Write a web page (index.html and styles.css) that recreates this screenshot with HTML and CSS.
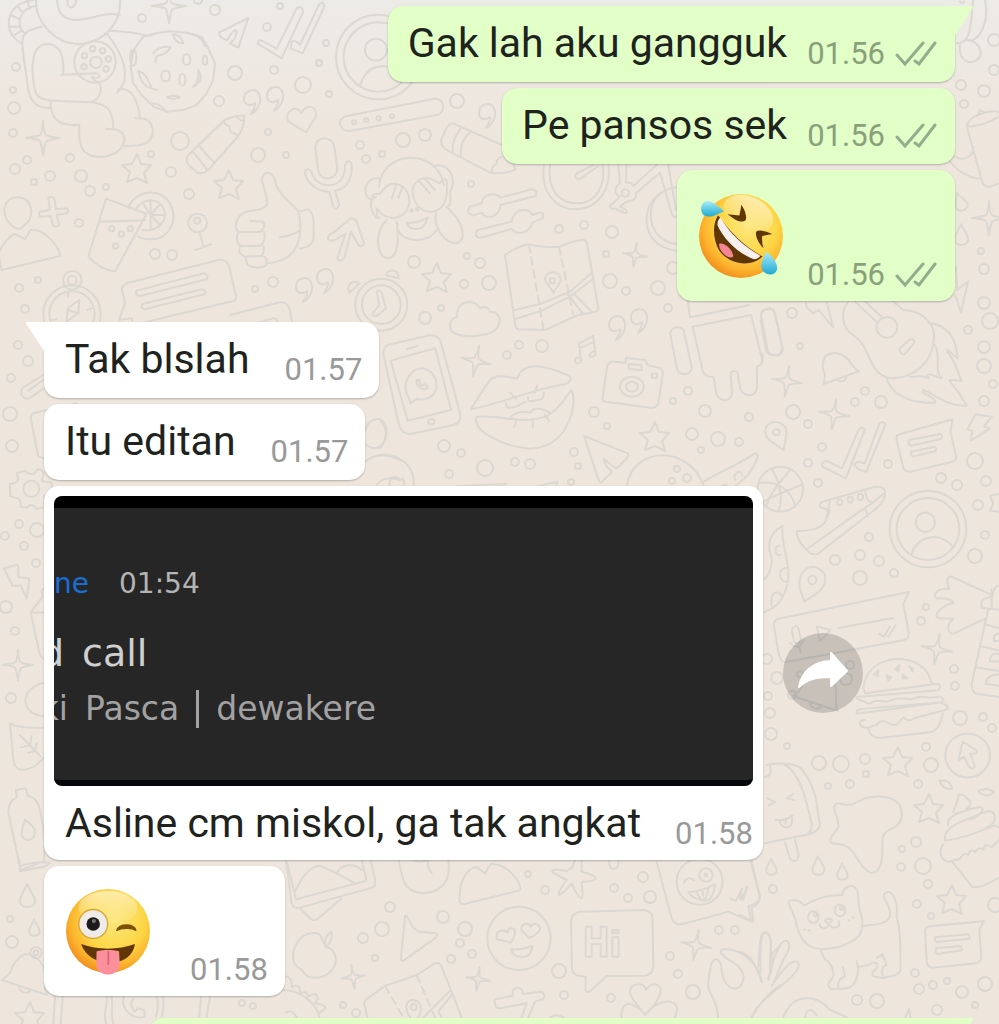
FILE: index.html
```
<!DOCTYPE html>
<html lang="id">
<head>
    <meta charset="UTF-8">
    <meta name="viewport" content="width=device-width, initial-scale=1.0">
    <title>Chat</title>
    <link rel="stylesheet" href="styles.css">
</head>
<body>
    <!-- Wallpaper -->
    <svg class="wallpaper" width="999" height="1024" aria-hidden="true">
        <defs>
            <path id="star" d="M1 -15L5 -5L15 -4L8 4L11 14L1 9L-9 13L-6 3L-14 -4L-4 -5Z"/>
            <path id="sparkle" d="M0 -17Q1 -3 3 -3Q5 -1 17 0Q4 2 3 4Q2 5 0 17Q-2 5 -3 3Q-5 1 -17 0Q-4 -2 -3 -3Q-1 -4 0 -17Z"/>
            <path id="quote" d="M-1 12C7 8 10 -2 7 -8C3 -15 -8 -12 -8 -3C-8 3 -2 5 3 1C4 6 0 9 -1 12Z"/>
            <path id="bell" d="M-4 -17C-12 -13 -17 -6 -18 0C-20 5 -24 6 -27 9L18 24C14 18 17 10 16 3C15 -8 7 -17 -4 -17M-10 16C-9 22 -2 23 1 20"/>
            <path id="drop" d="M0 -12C3 -5 8 0 8 5C8 13 -7 13 -7 5C-7 0 -3 -5 0 -12Z"/>
        </defs>
        <g id="dots"></g>

        <use href="#star" x="136" y="169"/>
        <use href="#star" x="228" y="185"/>
        <use href="#star" x="436" y="278"/>
        <use href="#star" x="654" y="437"/>
        <use href="#star" x="897" y="762"/>
        <use href="#star" x="928" y="809"/>
        <use href="#star" x="951" y="900"/>
        <use href="#star" x="29" y="1017"/>
        <use href="#sparkle" x="43" y="138"/>
        <use href="#sparkle" x="169" y="6"/>
        <use href="#sparkle" x="989" y="218"/>
        <use href="#sparkle" transform="translate(635 255) rotate(8) scale(.7)"/>
        <use href="#sparkle" transform="translate(476 361) rotate(12) scale(.9)"/>
        <use href="#sparkle" transform="translate(787 381) rotate(8) scale(.9)"/>
        <use href="#sparkle" transform="translate(834 414) rotate(8) scale(.9)"/>
        <use href="#sparkle" transform="translate(937 649) rotate(10) scale(.9)"/>
        <use href="#sparkle" transform="translate(353 977) rotate(-8) scale(.7)"/>
        <use href="#sparkle" transform="translate(478 979) rotate(8) scale(.7)"/>
        <use href="#sparkle" transform="translate(696 945) rotate(10) scale(.9)"/>
        <use href="#sparkle" transform="translate(18 665) scale(.9)"/>
        <use href="#quote" x="252" y="102"/>
        <use href="#quote" x="275" y="99"/>
        <use href="#quote" x="304" y="290"/>
        <use href="#quote" x="325" y="281"/>
        <use href="#quote" x="487" y="116"/>
        <use href="#quote" x="617" y="328"/>
        <use href="#quote" x="639" y="321"/>
        <use href="#bell" x="29" y="971"/>
        <use href="#bell" transform="translate(820 687)"/>
        <use href="#bell" transform="translate(836 365) rotate(-38) scale(.8)"/>
        <use href="#drop" x="27" y="896"/>
        <use href="#drop" transform="translate(34 928) scale(.7)"/>
        <use href="#drop" transform="translate(771 867) scale(.7)"/>
        <use href="#drop" transform="translate(818 866) scale(.8)"/>
        <use href="#drop" transform="translate(842 872) scale(.7)"/>
        <use href="#drop" transform="translate(961 235) scale(.9)"/>
        <use href="#drop" transform="translate(960 202) rotate(-20) scale(.8)"/>

        <!-- upper left -->
        <g transform="scale(.3333)">
            <path d="M108 0C105 70 170 132 235 132C310 130 365 70 360 0M172 0C172 40 190 60 230 60C285 55 320 35 360 45M202 0C202 30 225 30 228 0"/>
            <path d="M100 0C55 5 25 30 26 75C28 100 45 120 66 132M106 18C70 25 55 50 60 75C62 90 70 98 78 102M82 2L90 26M52 18L68 38M32 45L56 56M27 80L60 80M38 108L66 92"/>
            <path d="M125 80C95 88 75 92 70 110C62 125 70 150 72 180L85 270C92 310 120 325 152 325M105 270C90 200 95 130 145 132C185 135 192 180 190 220M105 270C110 300 140 300 180 303L270 307C310 300 310 240 285 245L276 230C300 240 305 225 290 220L185 224"/>
            <circle cx="285" cy="186" r="62"/><circle cx="288" cy="187" r="17"/>
            <circle cx="278" cy="146" r="8"/><circle cx="308" cy="152" r="8"/><circle cx="325" cy="177" r="8"/><circle cx="318" cy="207" r="8"/><circle cx="252" cy="200" r="8"/><circle cx="253" cy="167" r="8"/>
            <path d="M322 102C375 170 395 240 350 278M355 268C400 260 415 310 420 355C465 350 475 425 425 434Q400 440 372 437M152 305C150 350 170 380 238 374C235 430 240 470 300 471C380 470 395 390 340 388L318 386M340 388C340 340 330 310 270 307M405 355L420 355M330 92Q400 95 445 108L466 102"/>
            <path d="M466 100L510 94L560 98L605 110L625 145L645 190L640 240L620 280L590 315L550 330L500 335L460 320L425 285L400 250L392 200L400 150L430 110Z"/>
            <path d="M460 160Q480 135 512 142Q500 165 470 168L466 186M518 102Q545 105 550 130Q525 130 518 102ZM575 102Q605 110 615 138M415 212Q440 220 455 265Q425 260 415 212ZM455 265L470 270M595 210Q615 240 580 260Q600 240 595 210ZM500 292Q520 282 540 292Q520 300 500 292M455 310Q480 310 500 335"/>
            <ellipse cx="560" cy="179" rx="11" ry="16"/><ellipse cx="615" cy="181" rx="7" ry="14"/><ellipse cx="497" cy="228" rx="13" ry="16"/><ellipse cx="547" cy="239" rx="9" ry="18"/><ellipse cx="400" cy="173" rx="9" ry="24"/>
            <path d="M745 54L657 98Q658 115 682 120Q705 80 710 95Q710 115 690 130L715 143Z"/>
            <path d="M772 130Q778 118 785 122L830 146L890 25Q905 15 910 35L845 175Z"/>
            <path d="M872 145L875 125Q885 118 900 135L958 12Q972 2 973 20L908 160Z"/>
            <circle cx="1135" cy="171" r="127"/><circle cx="1135" cy="171" r="104"/><circle cx="1128" cy="149" r="33"/>
            <path d="M1080 258C1100 190 1150 190 1200 210"/>
            <path d="M919 397L865 365C850 335 890 310 905 340C915 310 955 315 947 350Z"/>
            <path d="M1040 348L1300 297C1335 290 1340 340 1310 345L1050 393C1015 395 1010 355 1040 348Z"/>
            <circle cx="1062" cy="367" r="6"/><circle cx="1099" cy="360" r="6"/><circle cx="1136" cy="355" r="6"/><circle cx="1176" cy="349" r="6"/>
            <path d="M733 347Q700 346 674 360L565 465Q555 480 566 495L590 517Q607 525 625 510L715 408Q733 380 733 347ZM670 362Q680 380 688 378Q690 400 700 398Q710 405 715 408M598 437Q610 455 642 487M580 457Q600 480 620 508M710 350Q715 360 732 363"/>
            <path d="M946 445C945 405 1000 405 1004 445L1012 505C1012 545 955 545 954 505ZM914 515Q925 500 934 515C950 575 1040 570 1035 495Q1042 475 1055 490C1060 560 1020 570 1005 572L1018 615Q1008 635 1000 620L988 575C950 575 920 550 914 515"/>
            <path d="M745 633C770 630 795 630 802 610C800 575 785 550 785 535C800 500 825 525 828 555C840 590 890 620 895 635C905 665 900 690 900 705C890 780 830 788 800 790C800 808 745 805 740 790L736 770C715 765 715 745 722 737C705 725 710 705 716 695C700 685 705 645 745 633ZM716 695L780 696Q800 680 790 665L750 663M722 737L780 738Q800 720 792 696M736 770L785 768Q795 755 790 738M785 768Q805 770 798 790M840 712Q885 705 900 690M895 635L925 628Q945 640 940 690C945 720 940 740 900 746"/>
            <path d="M318 596L440 642L345 814Q300 810 265 770ZM300 665L435 661"/>
            <circle cx="335" cy="686" r="8"/><circle cx="391" cy="686" r="8"/><circle cx="364" cy="702" r="8"/><circle cx="347" cy="738" r="8"/>
            <path d="M385 624C405 570 480 560 510 610C540 670 500 720 450 718Q430 718 415 710M405 630C430 590 480 595 492 630C505 665 470 695 430 690M452 645L452 600M452 645L480 612M452 645L495 645M452 645L480 675M452 645L452 690M452 645L430 612"/>
            <circle cx="593" cy="669" r="28"/><circle cx="592" cy="662" r="9"/><path d="M598 697L610 738M587 750L634 733"/>
            <path d="M145 595Q155 585 163 595L168 628L200 625Q210 632 200 640L170 645L178 675Q170 685 160 677L152 648L122 650Q112 642 120 635L150 630Z"/>
            <path d="M55 592C5 590 5 650 30 670Q55 700 75 675C105 650 100 595 55 592M5 810L-5 760Q20 710 45 702L75 718L92 690C130 685 180 740 180 768Z"/>
            <path d="M985 718Q980 705 1000 698L1050 657Q1060 650 1070 665L1092 730Q1085 745 1075 735L1053 695L1033 775Q1020 790 1012 775L1037 700L1005 720Q990 725 985 718"/>
            <path d="M1137 560C1145 450 1310 440 1332 555M1137 535C1090 530 1085 590 1115 600M1298 500C1345 480 1375 540 1350 575M1130 655C1100 620 1115 590 1128 592C1110 590 1115 580 1138 583L1160 558C1190 540 1230 560 1228 610C1220 660 1160 670 1130 625M1175 595L1190 552M1195 595L1208 560M1240 590C1230 550 1260 530 1290 535L1320 550C1330 530 1345 535 1340 560C1345 610 1320 635 1295 635C1260 635 1245 610 1240 590M1290 580L1258 545M1305 570L1275 535M1160 660C1120 700 1130 775 1165 775C1200 770 1195 700 1190 665M1308 640C1300 690 1340 730 1370 730C1400 720 1395 670 1340 620M1195 690C1210 730 1285 730 1310 690M1220 668Q1250 672 1283 653Q1275 690 1245 687Q1225 685 1220 668M1130 630Q1130 650 1138 655M1350 580Q1355 610 1345 620"/>
            <circle cx="1235" cy="632" r="4"/><circle cx="1252" cy="628" r="4"/>
            <path d="M380 850L655 780Q680 775 688 800L708 890Q708 900 700 903L400 975L395 955L357 960L375 910L365 865Q370 855 380 850ZM410 872L612 820Q628 825 620 838L420 888Q402 885 410 872M428 912L605 868Q622 872 615 882L435 928Q420 925 428 912M690 945L840 907Q860 905 868 925L880 985M720 985L820 955Q835 955 830 970"/>
            <circle cx="216" cy="942" r="86"/><circle cx="216" cy="942" r="68"/><circle cx="217" cy="841" r="28"/><circle cx="217" cy="841" r="13"/>
            <path d="M204 875L205 892M158 960L170 957M262 930L275 925M238 900L235 940L200 965L203 925ZM203 930L235 940"/>
            <circle cx="1144" cy="914" r="78"/><circle cx="1144" cy="914" r="58"/>
            <path d="M1130 875Q1140 865 1145 880L1158 925L1130 948Q1115 950 1120 938L1138 915ZM1048 878C1040 850 1055 840 1080 850ZM1158 826C1165 805 1195 805 1196 836Z"/>
        </g>

        <!-- middle, next to the sent bubbles -->
        <g transform="translate(370 80) scale(.3333)">
            <path d="M220 165Q230 130 250 130L395 195M220 165Q205 185 222 205L360 278Q400 285 437 268L430 255M275 142Q240 185 250 220M300 156Q265 190 275 232M395 230Q380 235 380 250Q365 260 365 275"/>
            <path d="M300 380L335 370C340 335 380 340 392 353L485 328Q505 330 497 348L392 375C385 415 350 420 335 398L310 407Q285 400 300 380M322 450L425 425C430 385 480 380 487 405L510 397Q525 400 518 415L487 428C475 465 440 465 425 447L330 474Q310 470 322 450"/>
            <path d="M522 255C510 340 560 388 618 388C690 385 725 320 715 255M540 255C530 330 570 370 620 370C680 370 708 315 698 255M670 255L617 282Q612 298 630 297L685 258M745 255L750 310C730 325 735 345 750 350L720 378Q722 390 735 385L765 400Q775 395 765 388L750 380L770 365C800 360 800 350 798 340L870 278L905 400Q910 415 918 410M770 255L768 308Q785 305 790 318L860 255M895 255L918 390"/>
            <circle cx="766" cy="339" r="11"/>
            <path d="M918 322C800 340 800 500 918 512M880 335C820 370 830 480 918 492"/>
            <path d="M405 525Q440 500 475 493Q520 505 570 500Q610 480 640 480Q650 480 652 495L685 685Q685 695 670 697L625 705L525 750L445 748Q435 745 435 730ZM435 690L510 672L600 635L665 578M435 717L515 692L600 650L665 600M592 640L640 703M610 640L665 695"/>
            <path stroke-dasharray="8 5" d="M477 493L520 745M567 500L610 705"/>
            <path d="M550 638C535 610 522 605 525 595C530 570 570 570 572 600C570 615 555 625 550 638Z"/><circle cx="547" cy="602" r="8"/>
            <path d="M260 712C260 680 275 665 298 667C320 665 325 680 330 685C350 675 360 690 360 695C385 695 395 715 385 735C380 770 280 780 245 755C235 740 240 715 260 712Z"/>
        </g>

        <!-- far right -->
        <g transform="translate(760 0) scale(.3333)">
            <path d="M640 0C630 60 640 130 590 130M675 0C690 60 660 120 630 122M600 135C595 190 640 200 660 170C670 140 640 120 620 120M600 5Q605 15 612 5"/>
            <path d="M620 378C625 350 680 330 717 335M620 378C650 385 690 365 717 350M655 342L660 330L672 336M620 378L668 550Q675 562 690 560L717 550M585 470C600 480 640 480 640 440M570 485C600 520 640 540 665 535"/>
            <path d="M588 800L592 870L624 845L603 938L586 885M138 910L140 922L160 940L175 930L220 982L200 907M265 905C240 935 245 985 280 1005C340 1050 320 1120 390 1135C460 1135 520 1090 522 1010C525 960 470 930 430 930L400 905M285 905L352 968M310 900L370 955M0 1095L8 1085V1060"/>
            <circle cx="381" cy="982" r="31"/>
            <path d="M420 1055Q415 1045 425 1040L450 1018Q465 1015 462 1030L435 1062Q425 1065 420 1055M505 968C570 975 590 1020 593 1075C570 1060 560 1040 562 1055C590 1090 590 1110 605 1143C575 1140 560 1135 575 1150C600 1180 610 1200 620 1218C560 1220 520 1180 490 1170C475 1180 530 1190 525 1208C480 1210 400 1200 380 1135M525 1035C545 1070 520 1110 545 1135C525 1130 495 1110 505 1135C480 1120 465 1135 450 1130M5 935Q25 920 42 930L67 1040Q65 1070 40 1065Q20 1065 18 1050L2 960"/>
        </g>

        <!-- centre strip -->
        <g transform="translate(380 300) scale(.3948 .3333)">
            <path d="M8 160Q10 135 30 132L125 106Q150 105 155 130L204 345Q205 370 185 375L75 403Q55 400 48 375ZM27 182L140 145L180 330L70 362ZM68 147L95 138"/>
            <circle cx="130" cy="365" r="8"/><path d="M78 310L72 290C50 250 80 205 105 205C150 210 160 290 110 298Q100 300 93 296ZM92 240C90 260 115 280 122 260L112 252L106 258Q98 250 100 240Z"/>
            <path d="M230 328L275 245C290 220 320 230 347 236C360 190 400 185 480 228Q490 240 470 252C380 270 310 310 230 328ZM245 350C320 345 350 375 420 350C460 325 475 280 485 270C500 300 485 440 380 446C310 440 230 390 245 350M320 310Q315 330 345 320L370 305M375 292Q370 310 400 300Q415 300 415 278M332 350C350 330 370 335 380 338C395 315 420 330 432 340M330 278L345 298M398 256L392 278M345 362L340 382M387 362V382M418 345L428 362"/>
            <path d="M498 190C485 175 505 165 510 180L503 130L540 108L546 165C530 180 525 160 540 155M505 145L542 125M498 190Q512 190 510 175"/>
            <path d="M575 200Q580 182 595 185L622 188V174L672 180L678 195L710 205Q718 210 716 225L705 310Q700 325 685 323L570 305Q560 300 565 285ZM630 192L663 196V210L630 207Z"/>
            <circle cx="638" cy="260" r="30"/><circle cx="638" cy="260" r="15"/><circle cx="695" cy="227" r="7"/>
            <path d="M735 100Q740 80 755 82Q768 82 770 95L790 205Q785 225 768 222Q755 222 752 205ZM965 45Q968 25 985 27Q1000 30 1002 45L1020 150Q1015 170 998 166Q985 165 982 150ZM792 80L940 45L968 180Q968 195 955 200V265Q950 290 930 285Q915 280 912 265L905 215Q890 210 888 220L892 280Q890 300 872 300Q855 298 852 280L845 232Q825 232 818 215ZM785 52L780 0M788 52L935 15"/>
            <path d="M517 408L628 460Q632 468 625 475L600 505C585 500 575 480 567 477Q570 500 588 515L560 548Q555 548 552 535Z"/>
            <path d="M625 558C640 440 780 430 820 558M820 545C850 520 900 500 950 460Q960 460 955 475C945 510 930 530 900 558M900 540C890 520 915 505 917 525M865 558Q870 550 880 558"/>
            <path d="M1022 450L985 420C965 390 980 365 1005 366C1035 375 1030 400 1028 415Z"/><circle cx="1004" cy="397" r="9"/>
            <path d="M1120 490Q1125 480 1135 485L1170 505L1212 390Q1220 375 1228 390L1180 535L1120 500ZM1202 495Q1205 480 1228 490L1265 370Q1275 360 1280 375L1232 515Q1215 515 1202 495"/>
            <path d="M1310 405L1450 358L1445 395L1460 475Q1455 485 1445 487L1345 515Q1330 515 1326 505L1308 420ZM1340 420L1420 402Q1428 408 1420 417L1345 437Q1335 430 1340 420M1345 455L1405 440Q1412 445 1408 453L1350 470Q1342 465 1345 455M1508 343L1550 350L1530 378L1545 385L1497 422L1500 393L1488 388Z"/>
            <path d="M0 360Q30 400 0 445M0 465C50 460 90 500 85 558M25 558C20 525 45 525 50 540Q65 530 60 558M195 558L320 552M400 558L450 545L445 558"/>
        </g>

        <!-- lower right -->
        <g transform="translate(740 440) scale(.3333 .3724)">
            <ellipse cx="121" cy="132" rx="68" ry="60"/>
            <path d="M60 115C110 110 150 130 165 175M72 165C100 150 160 130 185 120M95 78C120 110 130 160 115 190M150 80C125 110 90 140 80 175"/>
            <path d="M170 245C200 245 250 240 258 215Q265 200 270 190L240 180Q235 170 250 165L400 127Q440 120 435 150Q430 170 400 190L235 305Q220 312 205 300L185 280Q170 260 170 245ZM205 290L370 185Q400 170 430 145M375 185L385 205M258 215Q265 185 270 163M375 132Q378 165 395 168"/>
            <circle cx="299" cy="167" r="8"/><circle cx="331" cy="160" r="8"/><circle cx="361" cy="153" r="8"/>
            <ellipse cx="564" cy="239" rx="115" ry="103"/><ellipse cx="564" cy="239" rx="94" ry="83"/><ellipse cx="556" cy="221" rx="29" ry="26"/>
            <path d="M515 305C535 255 600 245 640 288M193 434L180 400C170 350 210 335 232 343C270 360 260 395 225 415Z"/><circle cx="217" cy="376" r="12"/>
            <path d="M128 230C120 280 150 320 145 370C135 430 110 450 72 462M128 230C70 260 90 300 95 320C95 350 85 365 72 375M118 283C100 285 105 315 122 308M140 343C110 345 115 385 145 380M125 418C110 400 90 410 95 445"/>
            <path d="M115 480L507 408L490 440L507 520Q505 535 490 538L135 597Q120 595 115 570L102 500Q100 485 115 480ZM295 505L460 478M418 520L432 528L450 500M445 528L467 497M155 510Q165 492 175 505L183 535Q175 555 162 540ZM150 545Q175 570 192 535M178 555L182 572M230 500L272 510L240 540Z"/>
            <path d="M753 415L635 367Q620 365 622 385L628 400C590 395 575 420 590 425C620 425 640 430 640 438C620 440 585 460 590 475C600 485 640 475 640 482C620 490 620 520 640 520L735 480M777 390Q760 395 758 420L735 425Q720 430 725 450L745 453L695 655Q695 680 715 682L777 690M755 400V450M745 453L777 455M735 495L777 505M720 553L777 565M705 610L777 620M777 520Q760 520 762 540H777M777 575Q750 570 750 595H777M777 630Q740 630 738 655L777 660"/>
            <path d="M370 665C380 590 480 570 540 605Q570 625 575 655L595 655Q605 665 595 672L350 690Q345 695 365 700C380 700 375 710 390 707C420 690 430 710 450 700C480 685 500 700 520 695C550 680 570 700 600 688Q620 700 600 705L350 735Q345 725 365 722L600 705L620 712Q630 720 615 725L530 745C510 755 500 755 490 745L470 765C450 770 430 740 410 765C390 765 400 775 375 772C355 770 355 750 375 752M385 775Q390 800 420 800L570 785Q600 780 608 735M370 665L375 680L590 655"/>
            <path d="M402 630L415 618L413 633ZM467 615L478 605L475 622ZM508 608L520 615L518 622ZM440 632L454 638L445 646ZM488 630L502 640L488 640Z"/>
            <ellipse cx="683" cy="847" rx="67" ry="59"/>
            <path d="M668 810L712 835Q710 845 690 842L705 875Q698 888 688 878L672 850L655 862Z"/>
            <path d="M80 872C130 865 180 870 190 890C240 950 230 1010 240 1030Q240 1050 210 1058L75 1083M130 870C180 890 200 970 215 1030Q215 1050 205 1055M75 905Q100 900 90 875M82 962L105 972L85 982M160 950L140 962L163 967M107 1020Q135 1025 157 1008M118 1022C125 1050 165 1045 155 1010M137 1020V1030M135 1080L148 1120Q155 1135 170 1128Q178 1120 175 1110L165 1074"/>
            <path d="M283 985Q285 970 310 978C340 985 350 970 375 962C430 950 490 960 485 1010C480 1050 430 1040 428 1070C425 1100 435 1160 395 1163C350 1150 350 1080 285 1085C255 1080 280 1060 295 1040C300 1020 280 1000 283 985Z"/>
            <path d="M598 915Q630 910 637 937Q610 940 598 915ZM715 943Q740 930 762 945Q740 965 715 943"/>
            <path d="M640 1000C645 985 655 965 655 955Q665 945 690 970Q695 985 680 990M625 1035C615 1005 680 995 720 985C740 990 720 1010 690 1020M615 1075C610 1045 640 1030 740 998C770 990 777 1030 740 1040M620 1075C670 1070 720 1050 765 1035L777 1040M610 1085C590 1110 610 1140 635 1130L660 1125Q670 1105 685 1115Q690 1095 705 1107Q715 1090 730 1100Q735 1080 755 1093L777 1075M635 1130L695 1198Q710 1210 777 1175"/>
            <path d="M165 1285C145 1240 135 1235 165 1235Q185 1240 192 1250Q250 1220 305 1222C315 1195 340 1190 352 1210C360 1240 350 1250 365 1280C375 1330 350 1345 300 1360C220 1380 180 1360 165 1285M370 1305C410 1300 440 1300 450 1280C455 1250 430 1240 432 1220C450 1200 475 1230 470 1280C485 1320 480 1390 482 1425C465 1445 440 1440 430 1445L400 1440Q390 1430 410 1420C420 1400 400 1400 385 1410L355 1415C355 1440 345 1470 320 1472L275 1475Q255 1465 275 1448C290 1430 270 1400 255 1395L242 1372M308 1415L315 1440Q290 1450 295 1470M350 1400L355 1420M425 1380Q435 1395 440 1410Q420 1415 428 1440M410 1390L430 1382M238 1300C245 1320 265 1310 265 1300Q280 1315 297 1305L297 1292M265 1300L255 1290Q265 1280 277 1290Z"/>
            <circle cx="220" cy="1281" r="16"/><circle cx="300" cy="1263" r="16"/><circle cx="226" cy="1274" r="5"/><circle cx="305" cy="1257" r="5"/>
            <path d="M192 1315H196M206 1317H210M325 1290H329M337 1282H341M555 1315Q560 1305 575 1305L732 1292L718 1315L724 1390Q722 1402 710 1405L575 1417Q560 1415 560 1400ZM585 1335L685 1327Q692 1333 688 1339L590 1348Q582 1342 585 1335M588 1365L660 1359Q668 1365 665 1370L592 1380Q584 1375 588 1365"/>
            <path d="M65 1455C50 1410 30 1380 0 1375M62 1430C60 1370 60 1325 75 1322Q95 1325 92 1360L90 1425M85 1450C100 1390 120 1340 140 1345Q160 1355 130 1395L100 1460M95 1465C130 1420 150 1400 170 1400Q190 1410 150 1445C110 1480 60 1500 35 1550M130 1550C160 1480 230 1490 270 1530L320 1550M35 1130L60 1230Q55 1250 35 1255L40 1293L0 1275M0 1230L5 1205M10 1235L20 1200M497 1550L507 1528L512 1550M195 1550Q200 1530 215 1530L230 1545M750 150L777 145M750 150L760 170L750 190L777 193"/>
        </g>
        <circle cx="827" cy="667" r="6"/>
        <circle cx="827" cy="667" r="3"/>

        <!-- bottom -->
        <g transform="translate(280 850) scale(.3333)">
            <path d="M18 30L35 160Q40 178 60 173L270 115Q290 110 285 90L272 30M22 40L48 148L260 92L245 30M45 125C70 70 100 45 120 48Q130 48 225 100M170 70C180 45 220 35 245 60M60 175L90 205Q100 215 115 205L185 145"/>
            <path d="M355 30L370 90C385 140 470 145 500 90Q510 60 505 30M400 30Q420 40 445 30Q440 50 455 70M540 130C540 90 560 60 588 50L615 70L632 42C680 40 720 90 722 120L550 163Q535 165 540 130"/>
            <path d="M885 30C880 50 870 60 860 62C840 60 810 55 818 68L860 90Q830 130 838 135Q850 130 875 100Q895 145 905 145Q910 140 905 95Q945 95 947 85Q945 75 905 65L905 30M988 30Q985 55 1000 58Q1018 55 1015 30M1130 35L1175 205Q1185 228 1210 222L1345 185L1415 215L1405 168Q1445 160 1438 130L1412 35"/>
            <circle cx="1259" cy="95" r="69"/><circle cx="1278" cy="75" r="20"/><circle cx="1278" cy="75" r="4"/>
            <path d="M1212 97Q1225 75 1242 92M1225 127Q1260 125 1305 103Q1300 155 1270 152Q1235 145 1225 127M1250 125L1262 148Q1280 155 1285 115M1268 122L1270 138M1352 145L1368 153L1385 118M1383 148L1403 112"/>
            <circle cx="717" cy="265" r="95"/>
            <path d="M692 278L652 268C640 245 670 235 683 248C680 230 710 230 705 250Q702 265 692 278ZM747 264L725 240C720 220 745 215 752 230C760 215 785 225 780 240Q770 255 747 264ZM692 298Q725 300 757 288Q755 320 725 322Q700 320 692 298"/>
            <path d="M900 185L1095 180Q1118 185 1118 205L1120 350Q1118 375 1095 377L980 378L930 424Q915 430 917 415V380L900 378Q877 375 876 355L873 215Q875 188 900 185ZM917 230H935V265H962V230H980V320H962V282H935V320H917ZM997 262H1016V320H997ZM997 241H1016V250H997Z"/>
            <path d="M375 198Q380 195 390 215Q400 240 420 245L468 250Q475 255 465 265L370 332Q362 335 363 325ZM95 250C130 245 120 265 138 290C180 300 180 370 115 383C70 385 75 365 60 355C20 340 40 255 95 250ZM135 290Q130 260 155 245Q158 280 135 290"/>
            <path d="M262 502L252 460Q255 450 270 440L315 408L410 375L465 340Q478 335 485 350L545 502M430 502L508 425M475 485L515 435M475 485L485 502"/><path stroke-dasharray="8 5" d="M315 408L370 502M410 375L465 502"/>
            <path d="M390 502C370 470 380 450 400 450C425 455 430 475 415 502"/><circle cx="401" cy="471" r="9"/>
            <path d="M645 460Q640 445 660 445L698 437V422Q710 405 727 420L728 432L785 425Q800 435 788 448L765 455L745 502M725 502L740 460L660 475Q645 475 645 460M1095 495C1060 450 1040 430 1055 410C1075 395 1095 405 1098 420C1120 390 1145 405 1142 425C1135 460 1110 480 1095 495C1060 450 1020 450 1025 502M1095 495C1130 450 1190 440 1192 480L1185 502M810 502Q830 490 850 502"/>
            <path d="M1315 502C1310 440 1280 430 1285 400C1290 350 1295 325 1310 328Q1325 335 1325 360C1330 410 1360 425 1380 410C1410 370 1370 340 1340 325Q1310 305 1330 297C1390 295 1440 350 1445 395M1435 350C1440 310 1435 250 1455 247C1480 250 1470 290 1475 320Q1480 360 1465 385M1415 502Q1450 440 1500 405M1475 320Q1480 300 1500 290"/>
            <path d="M15 380Q35 375 35 412M10 420C60 420 110 460 118 502M35 412Q60 395 60 430Q85 420 82 440Q110 425 112 440Q115 450 105 460Q140 465 135 475L118 490M18 488Q35 475 50 502"/>
        </g>

        <!-- left edge -->
        <g transform="translate(0 440) scale(.3333 .3724)">
            <ellipse cx="94" cy="131" rx="24" ry="22"/>
            <path d="M75 82C85 95 105 95 112 78Q125 80 132 88L125 110L155 115V145Q130 145 132 155L135 180L110 185Q95 165 82 182L62 180Q65 155 45 155L30 150V118Q55 115 55 105L50 90Z"/>
            <path d="M12 345L50 335L55 340V368L88 372L80 425L62 390L38 392ZM133 400L125 402L127 422L92 463L118 570Q122 585 133 588M92 463H133M133 652C60 665 55 735 133 742M30 760L40 860C45 900 100 890 133 850M30 760Q50 775 133 772M60 792L122 850M90 820L95 795M90 820L62 826M105 835L110 815M105 835L85 840"/>
            <path d="M48 940L75 935Q80 935 82 955C110 960 120 980 125 1020Q135 1060 133 1130L62 1155L25 1000Q25 970 50 960ZM60 1145Q100 1130 150 1135Q150 1145 60 1158M75 1020Q65 1045 65 1060C70 1080 105 1080 105 1050Q100 1035 75 1020Z"/>
        </g>
        <g transform="translate(0 860) scale(.3333)">
            <circle cx="108" cy="278" r="17"/><circle cx="108" cy="278" r="7"/>
            <path d="M58 0L60 30Q100 25 133 20M165 410L160 492M188 410L182 492M320 410C325 440 305 460 320 492M335 410C340 440 330 460 340 492M372 410C360 450 400 480 435 470L432 450L415 445L405 455Q390 440 395 425L400 415M470 410Q478 440 468 470M488 410Q495 440 485 470M603 410L598 470M630 410L620 470"/>
        </g>
        <g transform="translate(0 300) scale(.3333)">
            <path d="M130 225L70 262Q60 270 65 285Q75 300 88 295L130 265M130 240L85 272M100 340Q90 345 93 360L115 470L133 475M100 340L230 310M1095 395C1100 350 1160 340 1160 395C1155 450 1120 455 1092 430M1090 490C1120 460 1160 460 1200 480M1130 555Q1150 525 1200 540"/>
        </g>
    </svg>

    <main class="chat">
        <div class="message sent tail">
            <p class="text">Gak lah aku gangguk</p>
            <div class="meta"><time>01.56</time><svg class="ticks" viewBox="0 0 42 26"><path d="M2 14L10 23L28 2M20 20L24 23L40 2"/></svg></div>
        </div>
        <div class="message sent">
            <p class="text">Pe pansos sek</p>
            <div class="meta"><time>01.56</time><svg class="ticks" viewBox="0 0 42 26"><path d="M2 14L10 23L28 2M20 20L24 23L40 2"/></svg></div>
        </div>
        <div class="message sent big">
            <svg class="emoji" viewBox="58 72 250 250" role="img" aria-label="🤣">
                <defs>
                    <radialGradient id="face" cx=".58" cy=".38" r=".66">
                        <stop offset="0" stop-color="#fbe87c"/>
                        <stop offset=".55" stop-color="#fcd544"/>
                        <stop offset=".8" stop-color="#fcb22c"/>
                        <stop offset="1" stop-color="#f08a1c"/>
                    </radialGradient>
                    <linearGradient id="shine" x1="0" y1="0" x2="0" y2="1">
                        <stop offset="0" stop-color="#fff6d8" stop-opacity=".7"/>
                        <stop offset="1" stop-color="#fff6d8" stop-opacity="0"/>
                    </linearGradient>
                    <linearGradient id="tear" x1="0" y1="0" x2="0" y2="1">
                        <stop offset="0" stop-color="#a6ecf8"/>
                        <stop offset="1" stop-color="#1fa9d2"/>
                    </linearGradient>
                </defs>
                <circle cx="183" cy="197" r="125" fill="url(#face)"/>
                <ellipse cx="205" cy="130" rx="78" ry="50" transform="rotate(25 205 130)" fill="url(#shine)"/>
                <path d="M115 135C150 185 190 225 247 258C215 290 150 285 118 240C98 205 98 160 115 135Z" fill="#5f3604"/>
                <path d="M122 142C150 190 190 227 241 256Q234 266 222 266C175 250 130 205 113 165Q112 150 122 142Z" fill="#f6f1ef"/>
                <path d="M118 220C135 215 160 240 160 258C145 270 115 240 118 220Z" fill="#f58592"/>
                <path d="M143 132L178 136Q182 120 184 104C196 120 202 145 196 151C180 160 160 145 143 132Z" fill="#5f3604"/>
                <path d="M276 191Q240 175 228 184C224 200 240 225 250 233Q244 215 246 197Z" fill="#5f3604"/>
                <path d="M133 123C110 105 95 92 82 93C62 95 58 128 75 137C92 145 115 130 133 123Z" fill="url(#tear)"/>
                <path d="M258 244C248 265 240 280 245 295C252 315 282 318 290 298C294 280 278 258 258 244Z" fill="url(#tear)"/>
            </svg>
            <div class="meta"><time>01.56</time><svg class="ticks" viewBox="0 0 42 26"><path d="M2 14L10 23L28 2M20 20L24 23L40 2"/></svg></div>
        </div>

        <div class="message received tail">
            <p class="text">Tak blslah</p>
            <div class="meta"><time>01.57</time></div>
        </div>
        <div class="message received">
            <p class="text">Itu editan</p>
            <div class="meta"><time>01.57</time></div>
        </div>

        <div class="row">
            <div class="message received media">
                <div class="photo">
                    <div class="line small"><span class="cut name">ne</span><span>01:54</span></div>
                    <div class="line title"><span class="cut">d</span><span>call</span></div>
                    <div class="line sub"><span class="cut">ki</span><span>Pasca</span><i></i><span>dewakere</span></div>
                </div>
                <div class="caption">
                    <p class="text">Asline cm miskol, ga tak angkat</p>
                    <div class="meta"><time>01.58</time></div>
                </div>
            </div>
            <button class="forward" type="button" aria-label="Teruskan">
                <svg viewBox="0 0 80 80"><path d="M64 38L48 20V28C30 28 18 40 16 54C24 46 34 44 48 44V53Z"/></svg>
            </button>
        </div>

        <div class="message received big">
            <svg class="emoji" viewBox="200 86 250 250" role="img" aria-label="😜">
                <circle cx="325" cy="211" r="125" fill="url(#face)"/>
                <ellipse cx="325" cy="142" rx="88" ry="50" fill="url(#shine)"/>
                <circle cx="281" cy="190" r="45" fill="#d9a63c"/>
                <circle cx="281" cy="190" r="41" fill="#eeebe8"/>
                <circle cx="281" cy="190" r="20" fill="#1c1a1a"/>
                <circle cx="283" cy="181" r="6" fill="#777"/>
                <path d="M351 209C355 188 405 188 408 209C395 200 365 202 351 209Z" fill="#7d5006" stroke="#7d5006" stroke-width="4" stroke-linejoin="round"/>
                <path d="M245 250C295 268 355 268 405 250C395 325 270 325 245 250Z" fill="#5f3604"/>
                <path d="M291 272C305 266 345 266 358 272L360 312C355 350 295 350 290 312Z" fill="#fb8f9c"/>
                <path d="M326 273V310" stroke="#e0606f" stroke-width="5" stroke-linecap="round"/>
            </svg>
            <div class="meta"><time>01.58</time></div>
        </div>

        <div class="message sent tail next"></div>
    </main>

    <script>
        // Wallpaper dots: x, y, radius
        const dots = [
            [142,18,4],[215,10,5],[198,0,4],[280,6,3],[267,27,4],[326,43,3],[319,63,3],[274,70,4],[235,73,7],[303,85,8],[329,94,3],[16,67,4],[13,90,3],[14,108,6],[13,133,4],[219,101,5],
            [180,141,9],[268,132,3],[258,155,7],[286,155,3],[151,154,3],[171,172,5],[27,160,4],[15,169,5],[34,182,3],[50,176,5],[70,158,4],[81,176,6],[90,191,5],[106,187,3],[189,194,5],[79,223,4],
            [155,254,5],[172,255,5],[19,288,4],[38,280,3],[25,309,4],[273,282,5],[255,289,3],[457,101,7],[403,140,7],[425,135,6],[360,145,4],[382,154,3],[366,159,4],[471,184,3],
            [414,262,6],[467,256,3],[480,263,5],[489,283,7],[464,284,4],[441,308,3],[425,318,6],[559,229,4],[584,225,4],[612,232,6],[606,254,3],[610,281,7],[626,291,4],[658,288,7],[668,308,4],[673,268,6],
            [994,40,6],[994,70,5],[961,85,5],[984,91,6],[964,104,4],[981,251,3],[984,269,5],[984,303,6],[990,321,8],[968,330,4],[984,347,6],[984,366,7],[993,384,4],[984,401,5],
            [792,313,5],[800,346,3],[865,391,4],[855,402,4],[881,402,6],[793,412,7],[808,424,4],[519,345,4],[542,346,6],[507,355,4],[688,391,4],[673,401,3],[705,411,6],
            [594,412,5],[607,426,3],[749,417,4],[692,434,6],[718,439,7],[739,442,4],[701,450,3],[822,447,4],[574,452,4],[578,466,3],[444,446,6],[461,453,4],[485,468,8],[515,462,4],[530,464,5],[449,474,4],
            [677,469,3],[687,478,4],[672,481,3],[571,482,3],
            [808,463,4],[888,464,4],[975,461,8],[941,478,5],[957,485,5],[986,481,5],[978,505,5],[818,483,4],[985,535,4],[975,556,7],[869,537,4],[835,560,5],[860,555,5],[879,561,5],[894,573,4],[860,578,7],
            [926,607,3],[921,621,4],[954,669,4],[955,686,4],[767,659,5],[777,678,6],[768,696,4],[770,713,5],[771,734,6],[787,746,3],[800,674,3],[792,695,4],[846,679,6],[850,665,4],
            [960,718,7],[983,717,4],[992,728,4],[926,747,4],[931,765,7],[819,763,7],[841,764,8],[865,759,5],[866,774,3],[850,784,4],[828,786,3],[918,784,4],[916,842,5],[902,849,3],[901,867,4],[923,866,8],
            [928,884,4],[917,904,4],[931,916,3],[995,905,7],[773,889,4],[915,973,4],[919,989,5],[933,985,4],[947,981,3],[962,992,6],[985,984,7],[975,1005,3],[937,1010,5],[857,1000,5],[877,1001,7],
            [528,874,3],[545,890,4],[643,877,5],[614,888,4],[628,898,4],[650,897,6],[390,907,5],[443,917,6],[465,929,7],[382,929,7],[363,938,5],[460,943,4],[472,954,4],[451,959,4],[375,958,3],
            [559,971,7],[564,995,4],[611,998,4],[678,974,4],[693,992,7],[670,956,4],[719,930,4],[735,930,4],[343,1005,3],[356,1013,4],[242,1003,3],[253,1006,3],
            [12,446,6],[19,524,4],[37,530,7],[5,536,4],[24,546,4],[36,563,4],[6,607,6],[15,631,4],[11,698,5],[10,919,3],[12,942,6],[18,345,4],[28,361,5],[11,378,4],[10,414,7]
        ];

        const group = document.getElementById('dots');
        dots.forEach(([x, y, r]) => {
            const c = document.createElementNS('http://www.w3.org/2000/svg', 'circle');
            c.setAttribute('cx', x);
            c.setAttribute('cy', y);
            c.setAttribute('r', r);
            group.appendChild(c);
        });
    </script>
</body>
</html>
```
FILE: styles.css
```
:root {
    --sent: #e1ffc7;
    --received: #ffffff;
    --line: #dbd8d1;
}

* {
    margin: 0;
    padding: 0;
    box-sizing: border-box;
}

body {
    position: relative;
    background: linear-gradient(#edebe7, #eee6dd 130px);
    font-family: Roboto, sans-serif;
    color: #20231d;
}

.wallpaper {
    position: absolute;
    top: 0;
    left: 0;
    z-index: -1;
    fill: none;
    stroke: var(--line);
    stroke-width: 2;
    stroke-linejoin: round;
    stroke-linecap: round;
}

.wallpaper * {
    vector-effect: non-scaling-stroke;
}

.chat {
    display: flex;
    flex-direction: column;
    align-items: flex-start;
    gap: 6px;
    height: 100vh;
    padding: 6px 44px 0;
    overflow: hidden;
}

.message {
    position: relative;
    display: flex;
    flex-shrink: 0;
    align-items: flex-end;
    padding: 13px 17px 10px 21px;
    border-radius: 15px;
    box-shadow: 0 1px 2px rgba(0,0,0,0.25);
}

.sent {
    align-self: flex-end;
    gap: 20px;
    padding: 13px 18px 10px 20px;
    background-color: var(--sent);
}

.received {
    gap: 35px;
    background-color: var(--received);
}

.sent + .received {
    margin-top: 15px;
}

/* Speech tail */
.tail::before {
    content: "";
    position: absolute;
    top: 0;
    width: 34px;
    height: 29px;
}

.sent.tail::before {
    right: -18px;
    background-color: var(--sent);
    clip-path: polygon(0 0, 97% 0, 100% 5%, 47% 100%, 0 100%);
}

.received.tail::before {
    left: -18px;
    background-color: var(--received);
    clip-path: polygon(100% 0, 3% 0, 0 5%, 53% 100%, 100% 100%);
}

.text {
    margin-bottom: 5px;
    font-size: 41px;
    line-height: 48px;
    white-space: nowrap;
}

.meta {
    display: flex;
    align-items: center;
    gap: 10px;
    font-size: 31px;
    line-height: 36px;
    color: #999;
}

.sent .meta {
    color: #8a9f7b;
}

.ticks {
    width: 42px;
    height: 26px;
    fill: none;
    stroke: #92ad8b;
    stroke-width: 3;
    stroke-linecap: round;
}

/* Emoji only */
.big {
    padding: 23px 17px 8px 22px;
}

.sent.big {
    gap: 24px;
    padding: 24px 18px 8px 22px;
}

.received.big {
    gap: 40px;
}

.emoji {
    width: 84px;
    height: 84px;
    margin-bottom: 15px;
    overflow: visible;
}

/* Photo with caption */
.row {
    display: flex;
    align-items: center;
    gap: 20px;
}

.media {
    flex-direction: column;
    align-items: stretch;
    gap: 0;
    padding: 10px 10px 8px;
}

.photo {
    display: flex;
    flex-direction: column;
    height: 290px;
    padding-top: 57px;
    overflow: hidden;
    border-top: 12px solid #000;
    border-bottom: 6px solid #07080c;
    border-radius: 8px;
    background-color: #262626;
    font-family: "DejaVu Sans", sans-serif;
    color: #b4b4b4;
}

.line {
    display: flex;
}

.cut {
    display: flex;
    flex-shrink: 0;
    justify-content: flex-end;
}

.small {
    gap: 30px;
    font-size: 28px;
    line-height: 38px;
}

.small .cut {
    width: 35px;
}

.name {
    color: #1a6fd4;
}

.title {
    gap: 18px;
    margin-top: 22px;
    font-size: 38px;
    line-height: 56px;
    color: #d0d0d0;
}

.title .cut {
    width: 10px;
}

.sub {
    gap: 17px;
    font-size: 33px;
    line-height: 56px;
    color: #a2a2a2;
}

.sub .cut {
    width: 14px;
}

.sub i {
    align-self: center;
    width: 3px;
    height: 38px;
    background-color: #a2a2a2;
}

.caption {
    display: flex;
    align-items: flex-end;
    justify-content: space-between;
    gap: 34px;
    padding: 13px 0 0 11px;
}

.forward {
    width: 80px;
    height: 80px;
    border: none;
    border-radius: 50%;
    background-color: rgba(0,0,0,0.16);
    cursor: pointer;
}

.forward svg {
    display: block;
    fill: #fff;
    stroke: #fff;
    stroke-width: 2;
    stroke-linejoin: round;
}

.next {
    width: 806px;
    max-width: 100%;
    height: 76px;
    margin-top: 16px;
}
```
